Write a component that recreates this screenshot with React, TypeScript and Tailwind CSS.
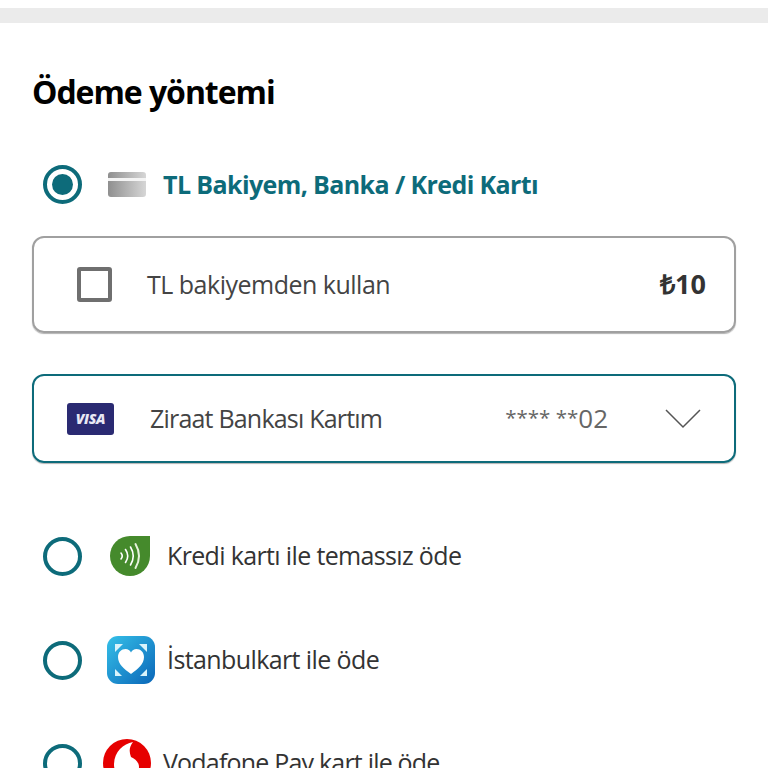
import React from "react";

const font = "font-['Open_Sans',sans-serif]";

const Radio = ({ checked = false }: { checked?: boolean }) => (
  <div className="flex h-[39px] w-[39px] shrink-0 items-center justify-center rounded-full border-[4px] border-[#0d6b7a]">
    {checked && <div className="h-[21px] w-[21px] rounded-full bg-[#0d6b7a]" />}
  </div>
);

const CardIcon = () => (
  <svg width="38" height="26" viewBox="0 0 38 26" className="shrink-0">
    <defs>
      <linearGradient id="cardGrad" x1="0" y1="0" x2="1" y2="0">
        <stop offset="0" stopColor="#8f8f8f" />
        <stop offset="1" stopColor="#d6d6d6" />
      </linearGradient>
    </defs>
    <rect x="0" y="0" width="38" height="25" rx="3" fill="url(#cardGrad)" />
    <rect x="0" y="6" width="38" height="3" fill="#f4f4f4" />
  </svg>
);

const NfcIcon = () => (
  <svg width="40" height="40" viewBox="0 0 40 40" className="shrink-0">
    <path d="M20 0H40V20A20 20 0 1 1 20 0Z" fill="#458a2c" />
    <g fill="none" stroke="#ffffff" strokeLinecap="round">
      <path d="M11 17Q13.5 20 11 23" strokeWidth="1.6" />
      <path d="M15.5 13.5Q20 20 15.5 26.5" strokeWidth="1.6" />
      <path d="M20.5 11Q26 20 20.5 29" strokeWidth="1.6" />
      <path d="M25.5 8Q32.5 20 25.5 32" strokeWidth="2" stroke="#e6f2dc" />
    </g>
  </svg>
);

const IstanbulkartIcon = () => (
  <svg width="48" height="48" viewBox="0 0 48 48" className="shrink-0">
    <defs>
      <linearGradient id="ikGrad" x1="0" y1="0" x2="1" y2="1">
        <stop offset="0" stopColor="#35c0e8" />
        <stop offset="1" stopColor="#0a66b8" />
      </linearGradient>
    </defs>
    <rect width="48" height="48" rx="11" fill="url(#ikGrad)" />
    <path d="M8 8H16L8 16Z" fill="#d9f3fb" />
    <path d="M40 8H32L40 16Z" fill="#d9f3fb" />
    <path d="M8 40H15L8 33Z" fill="#d9f3fb" />
    <path d="M40 40H33L40 33Z" fill="#d9f3fb" />
    <path d="M24 38C17 33 11 28 11 21C11 16 14.5 13 18.5 13C21 13 23 14.5 24 16.5C25 14.5 27 13 29.5 13C33.5 13 37 16 37 21C37 28 31 33 24 38Z" fill="#ffffff" />
  </svg>
);

const VodafoneIcon = () => (
  <svg width="48" height="48" viewBox="0 0 48 48" className="shrink-0">
    <circle cx="24" cy="24" r="24" fill="#e60000" />
    <path d="M30 3C20 5 11 13 11 26C11 33 17 38 24 38C31 38 36 33 36 28C36 23 32 20 28 18C26 13 26 8 30 3Z" fill="#ffffff" />
  </svg>
);

const App = () => {
  return (
    <div className={`h-[768px] w-[768px] overflow-hidden bg-white pt-2 ${font}`}>
      <div className="h-[15px] bg-[#ebebeb]" />
      <h1 className="mt-[45px] ml-8 text-[32px] leading-[48px] font-bold tracking-[-1.05px] text-black">
        Ödeme yöntemi
      </h1>

      <div className="mt-[49px] ml-[43px] flex items-center">
        <Radio checked />
        <div className="ml-[26px]">
          <CardIcon />
        </div>
        <span className="mb-[2px] ml-[17px] text-[25px] leading-8 font-bold tracking-[-0.6px] text-[#0d6b7a]">
          TL Bakiyem, Banka / Kredi Kartı
        </span>
      </div>

      <div className="mx-8 mt-[32px] flex h-[97px] items-center rounded-[12px] border-2 border-[#a0a0a0] pr-7 pl-[43px] shadow-[0_1px_1px_rgba(0,0,0,0.3)]">
        <div className="h-[35px] w-[35px] rounded-[3px] border-[4px] border-[#6f6f6f]" />
        <span className="ml-[35px] text-[25px] tracking-[-0.5px] text-[#444444]">TL bakiyemden kullan</span>
        <span className="ml-auto text-[27px] font-bold text-[#333333]">₺10</span>
      </div>

      <div className="mx-8 mt-[41px] flex h-[89px] items-center rounded-[12px] border-2 border-[#0d6b7a] pr-[33px] pl-[33px] shadow-[0_1px_1px_rgba(0,0,0,0.3)]">
        <div className="flex h-[32px] w-[47px] items-center justify-center rounded-[3px] bg-[#2a2a72] text-[14px] font-extrabold tracking-[-0.3px] text-[#e8e8f4] italic">
          VISA
        </div>
        <span className="ml-9 text-[25px] tracking-[-0.8px] text-[#444444]">Ziraat Bankası Kartım</span>
        <span className="ml-auto text-[26px] text-[#666666]">
          <span className="align-[3px] text-[20.5px]">**** **</span>02
        </span>
        <svg width="36" height="20" viewBox="0 0 36 20" fill="none" className="ml-[57px] shrink-0">
          <path d="M1 1L18 18L35 1" stroke="#555555" strokeWidth="1.5" />
        </svg>
      </div>

      <div className="mt-[73px] ml-[43px] flex items-center">
        <Radio />
        <div className="ml-[28px]">
          <NfcIcon />
        </div>
        <span className="ml-[17px] text-[25px] tracking-[-0.65px] text-[#333333]">Kredi kartı ile temassız öde</span>
      </div>

      <div className="mt-[60px] ml-[43px] flex items-center">
        <Radio />
        <div className="ml-[25px]">
          <IstanbulkartIcon />
        </div>
        <span className="ml-[12px] text-[25px] tracking-[-0.6px] text-[#333333]">İstanbulkart ile öde</span>
      </div>

      <div className="mt-[55px] ml-[43px] flex items-center">
        <Radio />
        <div className="ml-[21px]">
          <VodafoneIcon />
        </div>
        <span className="ml-[12px] text-[25px] tracking-[-0.8px] text-[#333333]">Vodafone Pay kart ile öde</span>
      </div>
    </div>
  );
};

export default App;
